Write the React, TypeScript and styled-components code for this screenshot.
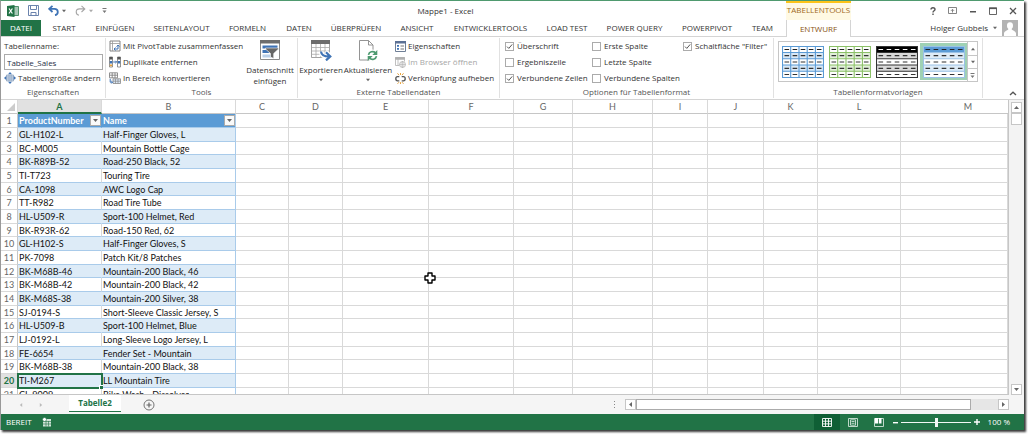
import React from 'react';
import styled, { createGlobalStyle, css } from 'styled-components';

const GREEN = '#217346';
const BLUE = '#3f73b5';
const UI = '"Open Sans", "Noto Sans", sans-serif';
const CELL = 'Lato, "Open Sans", sans-serif';

const Global = createGlobalStyle`
  *, *::before, *::after { box-sizing: border-box; }
  body { margin: 0; background: #fff; font: 8px/12px ${UI}; color: #333; }
  button, input { font: inherit; color: inherit; margin: 0; padding: 0; border: 0; background: none; border-radius: 0; }
  button { cursor: default; white-space: nowrap; }
  svg { display: block; flex: none; }
`;

const Desktop = styled.div`
  height: 100vh;
  min-height: 240px;
  padding: 0 4px 4px 0;
  background: #fff;
`;

const AppWindow = styled.main`
  position: relative;
  display: flex;
  flex-direction: column;
  height: 100%;
  overflow: hidden;
  background: #fff;
  border-top: 1px solid #4f9a6f;
  border-left: 1px solid #999;
  box-shadow: 2px 2px 2px #3a3a3a;
`;

/* Title bar and ribbon tabs */
const Header = styled.header`
  display: flex;
  flex: none;
  height: 36px;
`;
const HeaderMain = styled.div`
  flex: 1;
  min-width: 0;
`;
const TitleRow = styled.div`
  display: flex;
  align-items: center;
  height: 19px;
`;
const QuickAccess = styled.div`
  display: flex;
  align-items: center;
  gap: 9px;
  width: 104px;
  padding-left: 6px;
`;
const IconButton = styled.button`
  display: flex;
  align-items: center;
  justify-content: center;
  gap: 3px;
`;
const Title = styled.h1`
  flex: 1;
  margin: 0;
  font-size: 8px;
  font-weight: 400;
  text-align: center;
`;
const TabRow = styled.nav`
  display: flex;
  height: 17px;
  border-bottom: 1px solid #d4d4d4;
`;
const Tab = styled.button<{ $w: number; $file?: boolean }>`
  flex: none;
  width: ${p => p.$w}px;
  ${p => p.$file && css`
    background: ${GREEN};
    color: #fff;
    margin-right: 1px;
  `}
`;
const Context = styled.div`
  flex: none;
  width: 65px;
  display: flex;
  flex-direction: column;
`;
const ContextTitle = styled.div`
  height: 19px;
  padding-top: 1px;
  border-top: 2px solid #fcc419;
  background: #fff9e3;
  color: #a0691c;
  text-align: center;
`;
const ContextTab = styled.button`
  flex: 1;
  border-left: 1px solid #d4d4d4;
  border-right: 1px solid #d4d4d4;
  color: #8a5314;
`;
const HeaderEnd = styled.div`
  flex: none;
  width: 173px;
`;
const WindowButtons = styled(TitleRow)`
  justify-content: flex-end;
  gap: 12px;
  padding-right: 7px;
`;
const Account = styled(TabRow)`
  justify-content: flex-end;
  align-items: center;
  padding-right: 6px;
`;
const AccountButton = styled.button`
  display: flex;
  align-items: center;
  gap: 5px;
`;

/* Ribbon */
const Ribbon = styled.section`
  position: relative;
  display: flex;
  flex: none;
  height: 63px;
  border-bottom: 1px solid #d4d4d4;
`;
const Group = styled.section<{ $w: number }>`
  flex: none;
  display: flex;
  flex-direction: column;
  width: ${p => p.$w}px;
  margin: 1px 0;
  border-right: 1px solid #e1e1e1;
`;
const GroupBody = styled.div<{ $pad?: number }>`
  display: flex;
  flex: none;
  height: 48px;
  padding-left: ${p => p.$pad ?? 0}px;
`;
const GroupLabel = styled.h2`
  margin: 0;
  font-size: 8px;
  line-height: 12px;
  font-weight: 400;
  text-align: center;
  color: #555;
`;
const Stack = styled.div<{ $w?: number }>`
  display: flex;
  flex-direction: column;
  width: ${p => (p.$w ? `${p.$w}px` : 'auto')};
  padding-left: 3px;
`;
const Command = styled.button`
  display: flex;
  align-items: center;
  gap: 2px;
  height: 16px;
  &:disabled { color: #a6a6a6; }
`;
const FieldLabel = styled.label`
  height: 16px;
  line-height: 16px;
`;
const NameInput = styled.input`
  width: 99px;
  height: 16px;
  padding: 0 2px;
  border: 1px solid #ababab;
  color: #1f2f45;
  background: #fff;
`;
const BigCommand = styled.button<{ $w: number }>`
  display: flex;
  flex-direction: column;
  align-items: center;
  width: ${p => p.$w}px;
  padding-top: 2px;
  line-height: 11px;
  svg:first-child { margin-bottom: 3px; }
  svg + span + svg { margin-top: 3px; }
`;
const Check = styled.label`
  display: flex;
  align-items: center;
  gap: 3px;
  height: 16px;
  white-space: nowrap;
`;
const CheckBox = styled.input`
  appearance: none;
  width: 9px;
  height: 9px;
  border: 1px solid #ababab;
  background: #fff;
  &:checked {
    background: #fff url("data:image/svg+xml,%3Csvg xmlns='http://www.w3.org/2000/svg' viewBox='0 0 7 7'%3E%3Cpath d='M1 3.6 2.8 5.4 6.2 1.4' fill='none' stroke='%23555'/%3E%3C/svg%3E");
  }
`;
const Gallery = styled.div`
  display: flex;
  height: 41px;
  margin: 3px 0 0 4px;
  border: 1px solid #c6c6c6;
`;
const StyleButton = styled.button<{ $on?: boolean }>`
  width: 47px;
  height: 37px;
  margin-top: 1px;
  display: flex;
  align-items: center;
  justify-content: center;
  background: ${p => (p.$on ? '#9fd1b4' : 'none')};
`;
const GalleryScroll = styled.div`
  display: grid;
  grid-template-rows: repeat(3, 1fr);
  width: 10px;
  border-left: 1px solid #c6c6c6;
  button { display: flex; align-items: center; justify-content: center; }
  button + button { border-top: 1px solid #c6c6c6; }
`;
const Collapse = styled(IconButton)`
  margin: auto 7px 3px auto;
`;

/* Worksheet */
const Sheet = styled.div`
  display: flex;
  flex: 1;
  min-height: 0;
`;
const GridArea = styled.div`
  position: relative;
  flex: 1;
  min-width: 0;
  overflow: hidden;
  border-right: 1px solid #c6c6c6;
  border-bottom: 1px solid #c6c6c6;
`;
const Grid = styled.table`
  width: 100%;
  min-width: 960px;
  table-layout: fixed;
  border-collapse: separate;
  border-spacing: 0;
  font: 9px/12px ${CELL};
  color: #111;
`;
const ColHead = styled.th<{ $on?: boolean }>`
  height: 14px;
  padding: 0;
  line-height: 11px;
  font-weight: ${p => (p.$on ? 700 : 400)};
  color: ${p => (p.$on ? GREEN : '#666')};
  background: ${p => (p.$on ? '#e1e1e1' : '#fff')};
  border-right: 1px solid #d9d9d9;
  border-bottom: ${p => (p.$on ? `2px solid ${GREEN}` : '1px solid #c6c6c6')};
  &:last-child { padding-left: 27px; border-right: 0; }
`;
const Corner = styled.th`
  padding: 0 2px 0 0;
  border-right: 1px solid #d9d9d9;
  border-bottom: 1px solid #c6c6c6;
  svg { margin-left: auto; }
`;
const Row = styled.tr`
  height: 14px;
  &:nth-child(3n) { height: 13px; }
`;
const RowHead = styled.th<{ $on?: boolean }>`
  padding: 0;
  line-height: 11px;
  font-weight: ${p => (p.$on ? 700 : 400)};
  color: ${p => (p.$on ? GREEN : '#666')};
  background: ${p => (p.$on ? '#e1e1e1' : '#fff')};
  border-right: 1px solid #c6c6c6;
  border-bottom: 1px solid #d9d9d9;
`;
const Cell = styled.td<{ $kind?: 'head' | 'band' | 'plain'; $active?: boolean }>`
  padding: 0 0 0 1px;
  line-height: 11px;
  white-space: nowrap;
  border-right: 1px solid #d9d9d9;
  border-bottom: 1px solid #d9d9d9;
  ${p => p.$kind && css`
    border-bottom-color: #a9cbea;
    &:nth-child(3) { border-right-color: #a9cbea; }
  `}
  ${p => p.$kind === 'band' && css`
    background: #ddebf7;
    &:nth-child(2) { border-right-color: #ddebf7; }
  `}
  ${p => p.$kind === 'head' && css`
    background: #5b9bd5;
    color: #fff;
    font-weight: 700;
    border-right-color: #5b9bd5;
  `}
  ${p => p.$active && css`
    position: relative;
    outline: 2px solid ${GREEN};
    outline-offset: -1px;
    &::after {
      content: '';
      position: absolute;
      right: -2px;
      bottom: -2px;
      width: 4px;
      height: 4px;
      background: ${GREEN};
      border-top: 1px solid #fff;
      border-left: 1px solid #fff;
    }
  `}
`;
const HeadContent = styled.div`
  display: flex;
  align-items: center;
  justify-content: space-between;
`;
const FilterButton = styled.button`
  display: flex;
  align-items: center;
  justify-content: center;
  width: 11px;
  height: 11px;
  border: 1px solid #ababab;
  background: #fafafa;
`;
const MouseCursor = styled.svg`
  position: absolute;
  left: 423px;
  top: 172px;
`;
const VScroll = styled.div`
  display: flex;
  flex-direction: column;
  width: 15px;
  padding: 2px 2px 0;
  background: #f3f3f3;
`;
const ScrollButton = styled.button`
  flex: none;
  display: flex;
  align-items: center;
  justify-content: center;
  width: 11px;
  height: 11px;
  border: 1px solid #c6c6c6;
  background: #fff;
`;
const VThumb = styled.div`
  height: 12px;
  width: 11px;
  border: 1px solid #c6c6c6;
  background: #fff;
  margin-bottom: auto;
`;

/* Sheet tabs */
const SheetBar = styled.footer`
  display: flex;
  flex: none;
  align-items: center;
  height: 19px;
  background: #f5f5f5;
  padding-right: 15px;
`;
const SheetNav = styled.div`
  display: flex;
  align-items: center;
  gap: 16px;
  width: 68px;
  padding-left: 18px;
`;
const SheetTab = styled.button`
  align-self: flex-start;
  width: 52px;
  height: 17px;
  background: #fff;
  border-bottom: 1px solid ${GREEN};
  font-size: 8px;
  font-weight: 700;
  color: ${GREEN};
`;
const AddSheet = styled(IconButton)`
  margin-left: 22px;
`;
const HScrollArea = styled.div`
  display: flex;
  align-items: center;
  gap: 9px;
  width: 396px;
  margin-left: auto;
`;
const HScroll = styled.div`
  display: flex;
  flex: 1;
  background: #e6e6e6;
`;
const HThumb = styled.div`
  flex: 1;
  height: 11px;
  margin-right: 27px;
  border: 1px solid #ababab;
  background: #fff;
`;

/* Status bar */
const StatusBar = styled.footer`
  display: flex;
  flex: none;
  align-items: center;
  height: 16px;
  padding: 0 14px 0 5px;
  background: ${GREEN};
  color: #fff;
`;
const Macro = styled(IconButton)`
  margin: 0 auto 0 10px;
`;
const ViewButton = styled(IconButton)<{ $on?: boolean }>`
  width: 26px;
  height: 16px;
  background: ${p => (p.$on ? '#0f5f35' : 'none')};
`;
const ZoomBox = styled.div`
  display: flex;
  align-items: center;
  gap: 3px;
  margin-left: 1px;
`;
const ZoomSlider = styled.input`
  appearance: none;
  width: 70px;
  height: 10px;
  background: linear-gradient(#fff, #fff) center / 100% 1px no-repeat;
  opacity: 0.95;
  &::-webkit-slider-thumb {
    appearance: none;
    width: 3px;
    height: 9px;
    background: #fff;
  }
`;
const ZoomValue = styled.span`
  width: 27px;
  text-align: right;
`;

const Arrow = ({ dir = 'down', size = 5, color = '#666' }: { dir?: 'up' | 'down' | 'left' | 'right'; size?: number; color?: string }) => {
  const d = { down: 'M0 1h5L2.5 4z', up: 'M0 4h5L2.5 1z', left: 'M4 0v5L1 2.5z', right: 'M1 0v5l3-2.5z' }[dir];
  return <svg width={size} height={size} viewBox="0 0 5 5"><path d={d} fill={color} /></svg>;
};

const ExcelLogo = () => (
  <svg width="12" height="12" viewBox="0 0 12 12">
    <path d="M7 1.5h4.5v9H7z" fill="#fff" stroke={GREEN} strokeWidth=".8" />
    <path d="M8 3h3M8 5h3M8 7h3M8 9h3" stroke={GREEN} strokeWidth=".8" />
    <path d="M0 1 7.5 0v12L0 11z" fill={GREEN} />
    <path d="M2 3.5 5.4 8.5M5.4 3.5 2 8.5" stroke="#fff" strokeWidth="1.2" />
  </svg>
);
const SaveIcon = () => (
  <svg width="11" height="11" viewBox="0 0 11 11" fill="none" stroke="#6b83ad">
    <path d="M.5.5h10v10H.5zM2.500.5v4h6v-4M3 10.500V7.500h5v3" />
  </svg>
);
const UndoIcon = ({ color, flip }: { color: string; flip?: boolean }) => (
  <svg width="11" height="11" viewBox="0 0 11 11">
    <g transform={flip ? 'matrix(-1 0 0 1 11 0)' : undefined} fill="none" stroke={color} strokeWidth={flip ? 1.1 : 1.8}>
      <path d="M4.500 .8 1.200 3.900l3.300 3.100M1.400 3.900h5c4.400 0 4.400 5.600.6 6.300" />
    </g>
  </svg>
);
const MenuMark = () => (
  <svg width="5" height="7" viewBox="0 0 5 7"><path d="M.5 1h4v.9h-4zM.5 3.500h4L2.500 6z" fill="#777" /></svg>
);
const Avatar = () => (
  <svg width="16" height="16" viewBox="0 0 16 16">
    <path d="M0 0h16v16H0z" fill="#b3b3b3" />
    <path d="M8 2.300c2.300 0 3 1.600 3 3.400 0 1.500-.6 2.500-1.400 3.200.2 1.500 4 1.500 4.400 4.400V16H2v-2.700c.4-2.900 4.200-2.900 4.400-4.400C5.600 8.200 5 7.200 5 5.700c0-1.800.7-3.400 3-3.400z" fill="#fff" />
  </svg>
);
const ResizeIcon = () => (
  <svg width="12" height="12" viewBox="0 0 12 12">
    <path d="M2.500 3h7v6h-7z" fill="#c9d8ea" stroke="#8fa3bd" strokeWidth=".8" />
    <path d="M2.500 5h7M2.500 7h7M5 3v6M7.200 3v6" stroke="#8fa3bd" strokeWidth=".6" />
    <path d="M6 0l2 2.200H4zM6 12l2-2.200H4zM0 6l2.200-2v4zM12 6 9.800 4v4z" fill={BLUE} />
  </svg>
);
const PivotIcon = () => (
  <svg width="12" height="12" viewBox="0 0 12 12">
    <path d="M1 1h10v10H1z" fill="#fff" stroke="#777" strokeWidth=".9" />
    <path d="M1 3.500h10M3.500 1v10" stroke="#999" strokeWidth=".8" />
    <path d="M5 9h4V5.500M6.500 7.500 5 9l1.500 1.500M7.600 6.600 9 5l1.500 1.600" fill="none" stroke={BLUE} />
  </svg>
);
const DedupeIcon = () => (
  <svg width="12" height="12" viewBox="0 0 12 12">
    <path d="M.5 1h3v10h-3zM8.500 1h3v10h-3z" fill="#fff" stroke="#777" strokeWidth=".8" />
    <path d="M.5 1h3v2.500h-3zM8.500 1h3v2.500h-3z" fill="#555" />
    <path d="M.8 5h2.400v2.400H.8zM8.800 5h2.400v2.400H8.800z" fill={BLUE} />
    <path d="M.8 8.500h2.400v1.700H.8z" fill="#e8a33d" />
    <path d="M4.200 6h3.400M6.400 4.800 7.600 6 6.400 7.200" fill="none" stroke={BLUE} />
  </svg>
);
const ConvertIcon = () => (
  <svg width="12" height="12" viewBox="0 0 12 12">
    <path d="M.5.8h8v5h-8zM.5 3.200h8M3.200.8v5M6 .8v5" fill="#fff" stroke="#777" strokeWidth=".8" />
    <path d="M4 6.800h7.500v4.700H4z" fill="#dbe7f5" stroke="#888" strokeWidth=".8" />
    <path d="M4 9.200h7.500M6.500 6.800v4.700M9 6.800v4.700" stroke="#888" strokeWidth=".7" />
    <path d="M1.200 6.800v3.400h2.200M2.300 9l1.300 1.200-1.300 1.300" fill="none" stroke={BLUE} />
  </svg>
);
const SlicerIcon = () => (
  <svg width="20" height="21" viewBox="0 0 20 21">
    <path d="M.5.500h19v19H.5z" fill="#fff" stroke="#8a8a8a" />
    <path d="M0 0h20v3.500H0z" fill="#6d6d6d" />
    <path d="M2.500 5.500h15v3h-15zM2.500 10h7v3h-7z" fill={BLUE} />
    <path d="M2.500 14.500h9v3h-9z" fill="#b9cfe8" />
    <path d="M5.500 8h13v1l-4.800 4.500v5l-3.200-1.500v-3.500L5.500 9z" fill="#666" stroke="#fff" strokeWidth=".6" />
  </svg>
);
const ExportIcon = () => (
  <svg width="22" height="21" viewBox="0 0 22 21">
    <path d="M1.500 1.500h18v16h-18z" fill="#fff" stroke="#999" strokeWidth=".9" />
    <path d="M1 0h19v4H1z" fill="#6d6d6d" />
    <path d="M1.500 7.500h18M1.500 11h18M1.500 14.300h18M6 4v13.500M10.500 4v13.500M15 4v13.500" stroke="#aaa" strokeWidth=".8" />
    <path d="M11 11.500c.3 3.700 2.500 5 6 5" fill="none" stroke="#fff" strokeWidth="4.500" />
    <path d="M15.500 11.500l5.500 4.900-5.500 4.600" fill="none" stroke="#fff" strokeWidth="4" />
    <path d="M11 11.500c.3 3.700 2.500 5 8 5M16 12.300l4.300 4.100-4.300 4" fill="none" stroke={BLUE} strokeWidth="2.200" />
  </svg>
);
const RefreshIcon = () => (
  <svg width="20" height="21" viewBox="0 0 20 21">
    <path d="M1.500.5h9l4.500 4.500v15H1.500z" fill="#fff" stroke="#888" strokeWidth=".9" />
    <path d="M10.500.5V5H15" fill="none" stroke="#888" strokeWidth=".9" />
    <circle cx="14.500" cy="15.500" r="6" fill="#fff" />
    <path d="M10.500 14.800c.6-3.200 4.600-4.300 7-2M18.500 16.200c-.6 3.200-4.600 4.300-7 2" fill="none" stroke="#4d9a70" strokeWidth="1.700" />
    <path d="M19.300 10v5h-5zM9.700 21v-5h5z" fill="#4d9a70" />
  </svg>
);
const PropertiesIcon = () => (
  <svg width="11" height="11" viewBox="0 0 11 11">
    <path d="M.5.500h10v10H.5z" fill="#fff" stroke="#6f7f96" />
    <path d="M0 0h11v2.500H0z" fill="#5c7195" />
    <path d="M2 4h2v1.700H2zM2 7h2v1.700H2z" fill={BLUE} />
    <path d="M5.500 5h3.500M5.500 8h3.500" stroke="#666" strokeWidth=".9" />
  </svg>
);
const BrowserIcon = () => (
  <svg width="11" height="11" viewBox="0 0 11 11" fill="none" stroke="#b0b0b0" strokeWidth=".8">
    <path d="M4.500 8.500h-4v-8h9v4M.5 2.200h9M3 2v6.500" />
    <path d="M.5.5h9v1.500h-9z" fill="#b0b0b0" />
    <circle cx="7.500" cy="7.500" r="3" fill="#fff" />
    <path d="M4.500 7.500h6M7.500 4.500v6M7.500 4.500c-2 2-2 4 0 6M7.500 4.500c2 2 2 4 0 6" strokeWidth=".6" />
  </svg>
);
const UnlinkIcon = () => (
  <svg width="11" height="11" viewBox="0 0 11 11" fill="none">
    <path d="M4.300 3.600H2.600a1.800 2.100 0 0 0 0 4.200h1.700M6.700 3.600h1.700a1.800 2.100 0 0 1 0 4.200H6.700" stroke="#555" strokeWidth="1.300" />
    <path d="M2.500 .3l1.500 1.900M5.500 0v2M8.500 .3 7 2.200M2.500 10.800 4 9.200M5.500 11V9.200M8.500 10.800 7 9.200" stroke="#e8a33d" strokeWidth="1" />
  </svg>
);

const StylePreview = ({ line, head, band, grid }: { line: string; head: string; band: string; grid: boolean }) => (
  <svg width="42" height="32" viewBox="0 0 42 32">
    <path d="M0 0h42v32H0z" fill="#fff" />
    <path d="M0 6.500h42v6H0zM0 19h42v6.500H0z" fill={band} />
    <path d="M0 0h42v6.500H0z" fill={head} />
    <path d="M.5.500h41v31H.5zM0 6.500h42M0 12.700h42M0 19h42M0 25.300h42" fill="none" stroke={line} strokeWidth="1.100" />
    {grid && <path d="M8.700 0v32M17 0v32M25.200 0v32M33.400 0v32" stroke={line} strokeWidth="1.100" />}
    <path d="M2.500 3.500h37" stroke={head === '#000' ? '#fff' : '#222'} strokeWidth="1.200" strokeDasharray="4.600 3.500" />
    {[9.700, 16, 22.300, 28.500].map(y => (
      <path key={y} d={`M2.500 ${y}h37`} stroke="#333" strokeWidth="1.200" strokeDasharray="4.600 3.500" />
    ))}
  </svg>
);

const tabs: [string, number][] = [
  ['START', 44], ['EINFÜGEN', 58], ['SEITENLAYOUT', 75], ['FORMELN', 57], ['DATEN', 46], ['ÜBERPRÜFEN', 68],
  ['ANSICHT', 54], ['ENTWICKLERTOOLS', 93], ['LOAD TEST', 60], ['POWER QUERY', 75], ['POWERPIVOT', 70], ['TEAM', 41],
];

const columns: [string, number?][] = [
  ['A', 84], ['B', 134], ['C', 53], ['D', 54], ['E', 86], ['F', 85], ['G', 59], ['H', 80], ['I', 55], ['J', 56],
  ['K', 54], ['L', 83], ['M'],
];

const products: [string, string][] = [
  ['GL-H102-L', 'Half-Finger Gloves, L'],
  ['BC-M005', 'Mountain Bottle Cage'],
  ['BK-R89B-52', 'Road-250 Black, 52'],
  ['TI-T723', 'Touring Tire'],
  ['CA-1098', 'AWC Logo Cap'],
  ['TT-R982', 'Road Tire Tube'],
  ['HL-U509-R', 'Sport-100 Helmet, Red'],
  ['BK-R93R-62', 'Road-150 Red, 62'],
  ['GL-H102-S', 'Half-Finger Gloves, S'],
  ['PK-7098', 'Patch Kit/8 Patches'],
  ['BK-M68B-46', 'Mountain-200 Black, 46'],
  ['BK-M68B-42', 'Mountain-200 Black, 42'],
  ['BK-M68S-38', 'Mountain-200 Silver, 38'],
  ['SJ-0194-S', 'Short-Sleeve Classic Jersey, S'],
  ['HL-U509-B', 'Sport-100 Helmet, Blue'],
  ['LJ-0192-L', 'Long-Sleeve Logo Jersey, L'],
  ['FE-6654', 'Fender Set - Mountain'],
  ['BK-M68B-38', 'Mountain-200 Black, 38'],
  ['TI-M267', 'LL Mountain Tire'],
  ['CL-9009', 'Bike Wash - Dissolver'],
];

const Option = ({ label, on }: { label: string; on?: boolean }) => (
  <Check><CheckBox type="checkbox" defaultChecked={on} />{label}</Check>
);

const EmptyCells = () => <>{columns.slice(2).map(([name]) => <Cell key={name} />)}</>;

const HeaderCell = ({ label }: { label: string }) => (
  <Cell $kind="head">
    <HeadContent>{label}<FilterButton aria-label={`${label} filtern`}><Arrow /></FilterButton></HeadContent>
  </Cell>
);

export default function App() {
  return (
    <Desktop>
      <Global />
      <AppWindow>
        <Header>
          <HeaderMain>
            <TitleRow>
              <QuickAccess>
                <ExcelLogo />
                <IconButton aria-label="Speichern"><SaveIcon /></IconButton>
                <IconButton aria-label="Rückgängig"><UndoIcon color={BLUE} /><Arrow size={4} /></IconButton>
                <IconButton aria-label="Wiederholen"><UndoIcon color="#a6a6a6" flip /><Arrow size={4} color="#aaa" /></IconButton>
                <IconButton aria-label="Symbolleiste anpassen"><MenuMark /></IconButton>
              </QuickAccess>
              <Title>Mappe1 - Excel</Title>
            </TitleRow>
            <TabRow>
              <Tab $w={40} $file>DATEI</Tab>
              {tabs.map(([label, w]) => <Tab key={label} $w={w}>{label}</Tab>)}
            </TabRow>
          </HeaderMain>
          <Context>
            <ContextTitle>TABELLENTOOLS</ContextTitle>
            <ContextTab>ENTWURF</ContextTab>
          </Context>
          <HeaderEnd>
            <WindowButtons>
              <IconButton aria-label="Hilfe">
                <svg width="6" height="8" viewBox="0 0 6 8"><path d="M1 2.500C1 .2 5 .2 5 2.400 5 3.800 3 3.700 3 5.500M3 6.500V8" fill="none" stroke="#555" strokeWidth="1.400" /></svg>
              </IconButton>
              <IconButton aria-label="Menüband-Anzeigeoptionen">
                <svg width="9" height="7" viewBox="0 0 9 7" fill="none" stroke="#777" strokeWidth=".9"><path d="M.5.500h8v6h-8zM4.500 5.500v-3M3 3.800l1.500-1.500L6 3.800" /></svg>
              </IconButton>
              <IconButton aria-label="Minimieren">
                <svg width="8" height="8" viewBox="0 0 8 8"><path d="M1 4h6v1.500H1z" fill="#555" /></svg>
              </IconButton>
              <IconButton aria-label="Maximieren">
                <svg width="8" height="8" viewBox="0 0 8 8"><path d="M.5 1h7v6.500h-7z" fill="none" stroke="#555" strokeWidth=".9" /><path d="M0 .5h8v1.600H0z" fill="#555" /></svg>
              </IconButton>
              <IconButton aria-label="Schließen">
                <svg width="8" height="8" viewBox="0 0 8 8"><path d="M1 1l6 6M7 1 1 7" stroke="#555" strokeWidth="1.300" /></svg>
              </IconButton>
            </WindowButtons>
            <Account>
              <AccountButton>Holger Gubbels<Arrow size={4} /><Avatar /></AccountButton>
            </Account>
          </HeaderEnd>
        </Header>

        <Ribbon>
          <Group $w={105}>
            <GroupBody>
              <Stack>
                <FieldLabel htmlFor="table-name">Tabellenname:</FieldLabel>
                <NameInput id="table-name" defaultValue="Tabelle_Sales" />
                <Command><ResizeIcon />Tabellengröße ändern</Command>
              </Stack>
            </GroupBody>
            <GroupLabel>Eigenschaften</GroupLabel>
          </Group>
          <Group $w={192}>
            <GroupBody>
              <Stack $w={138}>
                <Command><PivotIcon />Mit PivotTable zusammenfassen</Command>
                <Command><DedupeIcon />Duplikate entfernen</Command>
                <Command><ConvertIcon />In Bereich konvertieren</Command>
              </Stack>
              <BigCommand $w={52}><SlicerIcon /><span>Datenschnitt<br />einfügen</span></BigCommand>
            </GroupBody>
            <GroupLabel>Tools</GroupLabel>
          </Group>
          <Group $w={202}>
            <GroupBody>
              <BigCommand $w={46}><ExportIcon /><span>Exportieren</span><Arrow size={4} /></BigCommand>
              <BigCommand $w={48}><RefreshIcon /><span>Aktualisieren</span><Arrow size={4} /></BigCommand>
              <Stack>
                <Command><PropertiesIcon />Eigenschaften</Command>
                <Command disabled><BrowserIcon />Im Browser öffnen</Command>
                <Command><UnlinkIcon />Verknüpfung aufheben</Command>
              </Stack>
            </GroupBody>
            <GroupLabel>Externe Tabellendaten</GroupLabel>
          </Group>
          <Group $w={274}>
            <GroupBody $pad={2}>
              <Stack $w={87}>
                <Option label="Überschrift" on />
                <Option label="Ergebniszeile" />
                <Option label="Verbundene Zeilen" on />
              </Stack>
              <Stack $w={91}>
                <Option label="Erste Spalte" />
                <Option label="Letzte Spalte" />
                <Option label="Verbundene Spalten" />
              </Stack>
              <Stack>
                <Option label={'Schaltfläche "Filter"'} on />
              </Stack>
            </GroupBody>
            <GroupLabel>Optionen für Tabellenformat</GroupLabel>
          </Group>
          <Group $w={209}>
            <GroupBody>
              <Gallery>
                <StyleButton aria-label="Blau mit Gitter"><StylePreview line="#5b9bd5" head="#fff" band="#d9e8f6" grid /></StyleButton>
                <StyleButton aria-label="Grün mit Gitter"><StylePreview line="#8cc168" head="#fff" band="#e2efda" grid /></StyleButton>
                <StyleButton aria-label="Schwarz"><StylePreview line="#333" head="#000" band="#d9d9d9" grid={false} /></StyleButton>
                <StyleButton aria-label="Blau" $on><StylePreview line="#9bc2e6" head="#5b9bd5" band="#ddebf7" grid={false} /></StyleButton>
                <GalleryScroll>
                  <button aria-label="Nach oben"><Arrow dir="up" size={4} /></button>
                  <button aria-label="Nach unten"><Arrow size={4} /></button>
                  <button aria-label="Alle Vorlagen"><MenuMark /></button>
                </GalleryScroll>
              </Gallery>
            </GroupBody>
            <GroupLabel>Tabellenformatvorlagen</GroupLabel>
          </Group>
          <Collapse aria-label="Menüband reduzieren">
            <svg width="8" height="5" viewBox="0 0 8 5"><path d="M1 4l3-2.800L7 4" fill="none" stroke="#555" strokeWidth="1.300" /></svg>
          </Collapse>
        </Ribbon>

        <Sheet>
          <GridArea>
            <Grid>
              <colgroup>
                <col width={17} />
                {columns.map(([name, w]) => <col key={name} width={w} />)}
              </colgroup>
              <thead>
                <tr>
                  <Corner aria-label="Alles markieren"><svg width="8" height="8" viewBox="0 0 8 8"><path d="M8 0v8H0z" fill="#ccc" /></svg></Corner>
                  {columns.map(([name]) => <ColHead key={name} $on={name === 'A'}>{name}</ColHead>)}
                </tr>
              </thead>
              <tbody>
                <Row>
                  <RowHead>1</RowHead>
                  <HeaderCell label="ProductNumber" />
                  <HeaderCell label="Name" />
                  <EmptyCells />
                </Row>
                {products.map(([number, name], i) => {
                  const kind = i % 2 === 0 ? 'band' : 'plain';
                  const active = number === 'TI-M267';
                  return (
                    <Row key={number}>
                      <RowHead $on={active}>{i + 2}</RowHead>
                      <Cell $kind={kind} $active={active}>{number}</Cell>
                      <Cell $kind={kind}>{name}</Cell>
                      <EmptyCells />
                    </Row>
                  );
                })}
              </tbody>
            </Grid>
            <MouseCursor width="12" height="12" viewBox="0 0 12 12">
              <path d="M4 1h4v3h3v4H8v3H4V8H1V4h3z" fill="#fff" stroke="#000" strokeWidth="1.400" strokeLinejoin="round" />
            </MouseCursor>
          </GridArea>
          <VScroll>
            <ScrollButton aria-label="Nach oben"><Arrow dir="up" /></ScrollButton>
            <VThumb />
            <ScrollButton aria-label="Nach unten"><Arrow /></ScrollButton>
          </VScroll>
        </Sheet>

        <SheetBar>
          <SheetNav>
            <IconButton aria-label="Vorheriges Blatt"><Arrow dir="left" size={4} color="#bbb" /></IconButton>
            <IconButton aria-label="Nächstes Blatt"><Arrow dir="right" size={4} color="#bbb" /></IconButton>
          </SheetNav>
          <SheetTab>Tabelle2</SheetTab>
          <AddSheet aria-label="Neues Blatt">
            <svg width="12" height="12" viewBox="0 0 12 12" fill="none" stroke="#666"><circle cx="6" cy="6" r="5" strokeWidth=".9" /><path d="M3.500 6h5M6 3.500v5" strokeWidth="1.200" /></svg>
          </AddSheet>
          <HScrollArea>
            <svg width="3" height="9" viewBox="0 0 3 9"><path d="M1 1h1v1H1zM1 4h1v1H1zM1 7h1v1H1z" fill="#888" /></svg>
            <HScroll>
              <ScrollButton aria-label="Nach links"><Arrow dir="left" /></ScrollButton>
              <HThumb />
              <ScrollButton aria-label="Nach rechts"><Arrow dir="right" /></ScrollButton>
            </HScroll>
          </HScrollArea>
        </SheetBar>

        <StatusBar>
          <span>BEREIT</span>
          <Macro aria-label="Makro aufzeichnen">
            <svg width="10" height="10" viewBox="0 0 10 10"><path d="M1 2h8v7.500H1z" fill="#cfe3d7" /><path d="M1 4.500h8M1 7h8M4 4v5.500M6.500 4v5.500" stroke={GREEN} strokeWidth=".6" /><circle cx="2.500" cy="2.500" r="2" fill="#fff" stroke={GREEN} strokeWidth=".6" /></svg>
          </Macro>
          <ViewButton aria-label="Normal" $on>
            <svg width="10" height="9" viewBox="0 0 10 9" fill="none" stroke="#fff" strokeWidth=".9"><path d="M.5.500h9v8h-9zM.5 3.200h9M.5 5.900h9M3.500.500v8M6.500.500v8" /></svg>
          </ViewButton>
          <ViewButton aria-label="Seitenlayout">
            <svg width="10" height="9" viewBox="0 0 10 9" fill="none" stroke="#cfe3d7" strokeWidth=".9"><path d="M.5.500h9v8h-9zM2.500 1.800h5v5.400h-5zM3.500 3.500h3M3.500 5.300h3" /></svg>
          </ViewButton>
          <ViewButton aria-label="Umbruchvorschau">
            <svg width="10" height="9" viewBox="0 0 10 9"><path d="M.5.500h9v8h-9z" fill="none" stroke="#cfe3d7" strokeWidth=".9" /><path d="M1 0h3.200v5.500H1zM5 0h2.500v5.500H5z" fill="#fff" /></svg>
          </ViewButton>
          <ZoomBox>
            <IconButton aria-label="Verkleinern"><svg width="5" height="5" viewBox="0 0 5 5"><path d="M0 2h5v1.400H0z" fill="#fff" /></svg></IconButton>
            <ZoomSlider type="range" min="0" max="100" defaultValue="50" aria-label="Zoom" />
            <IconButton aria-label="Vergrößern"><svg width="6" height="6" viewBox="0 0 6 6"><path d="M0 3h6M3 0v6" stroke="#fff" strokeWidth="1.400" /></svg></IconButton>
            <ZoomValue>100 %</ZoomValue>
          </ZoomBox>
        </StatusBar>
      </AppWindow>
    </Desktop>
  );
}
